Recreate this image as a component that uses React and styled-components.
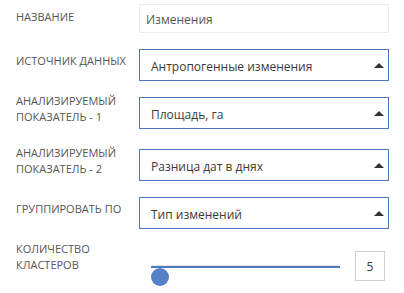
import React from "react";
import styled, { createGlobalStyle } from "styled-components";

const GlobalStyle = createGlobalStyle`
  html, body {
    margin: 0;
    padding: 0;
    background: #fff;
  }
  html {
    overflow: hidden;
  }
  body {
    font-family: "Open Sans", "Liberation Sans", sans-serif;
  }
`;

const Form = styled.div`
  display: flex;
  flex-direction: column;
  gap: 12px;
  padding-top: 4px;
  padding-bottom: 12px;
  width: 404px;
`;

const Row = styled.div`
  display: flex;
  align-items: center;
`;

const Label = styled.div`
  box-sizing: border-box;
  width: 139px;
  padding-left: 16px;
  padding-right: 8px;
  margin-bottom: 8px;
  font-size: 11px;
  line-height: 16px;
  color: #555;
  text-transform: uppercase;
`;

const TextInput = styled.div`
  box-sizing: border-box;
  width: 250px;
  height: 29px;
  margin-bottom: 4px;
  padding: 2px 0 0 6px;
  border: 1px solid #ececec;
  display: flex;
  align-items: center;
  font-size: 12px;
  color: #555;
`;

const Select = styled.div`
  box-sizing: border-box;
  width: 250px;
  height: 32px;
  border: 1px solid #4e75b6;
  display: flex;
  align-items: center;
  justify-content: space-between;
  padding: 2px 4px 0 11px;
  font-size: 12px;
  color: #3a3a3a;
`;

const Arrow = styled.span`
  width: 0;
  height: 0;
  border-left: 5px solid transparent;
  border-right: 5px solid transparent;
  border-bottom: 5px solid #333;
  margin-bottom: 2px;
`;

const SliderArea = styled.div`
  align-self: flex-start;
  box-sizing: border-box;
  width: 250px;
  margin-top: 10px;
  height: 30px;
  display: flex;
  align-items: center;
  padding-left: 12px;
`;

const Track = styled.div`
  position: relative;
  width: 189px;
  height: 2px;
  background: #4f7ac0;
  box-shadow: 0 -1px 0 #e6e6e6;
  margin-top: 1px;
`;

const Thumb = styled.div`
  position: absolute;
  left: 0;
  top: 2px;
  width: 18px;
  height: 18px;
  border-radius: 50%;
  background: #5682c9;
`;

const NumberBox = styled.div`
  box-sizing: border-box;
  margin-left: 15px;
  width: 30px;
  height: 30px;
  border: 1px solid #cfcfcf;
  display: flex;
  align-items: center;
  justify-content: center;
  font-size: 12px;
  color: #3a3a3a;
`;

const selects = [
  { label: "Источник данных", value: "Антропогенные изменения" },
  { label: "Анализируемый показатель - 1", value: "Площадь, га" },
  { label: "Анализируемый показатель - 2", value: "Разница дат в днях" },
  { label: "Группировать по", value: "Тип изменений" },
];

export default function App() {
  return (
    <>
      <GlobalStyle />
      <Form>
        <Row>
          <Label>Название</Label>
          <TextInput>Изменения</TextInput>
        </Row>
        {selects.map((s) => (
          <Row key={s.label}>
            <Label>{s.label}</Label>
            <Select>
              <span>{s.value}</span>
              <Arrow />
            </Select>
          </Row>
        ))}
        <Row>
          <Label>Количество кластеров</Label>
          <SliderArea>
            <Track>
              <Thumb />
            </Track>
            <NumberBox>5</NumberBox>
          </SliderArea>
        </Row>
      </Form>
    </>
  );
}
